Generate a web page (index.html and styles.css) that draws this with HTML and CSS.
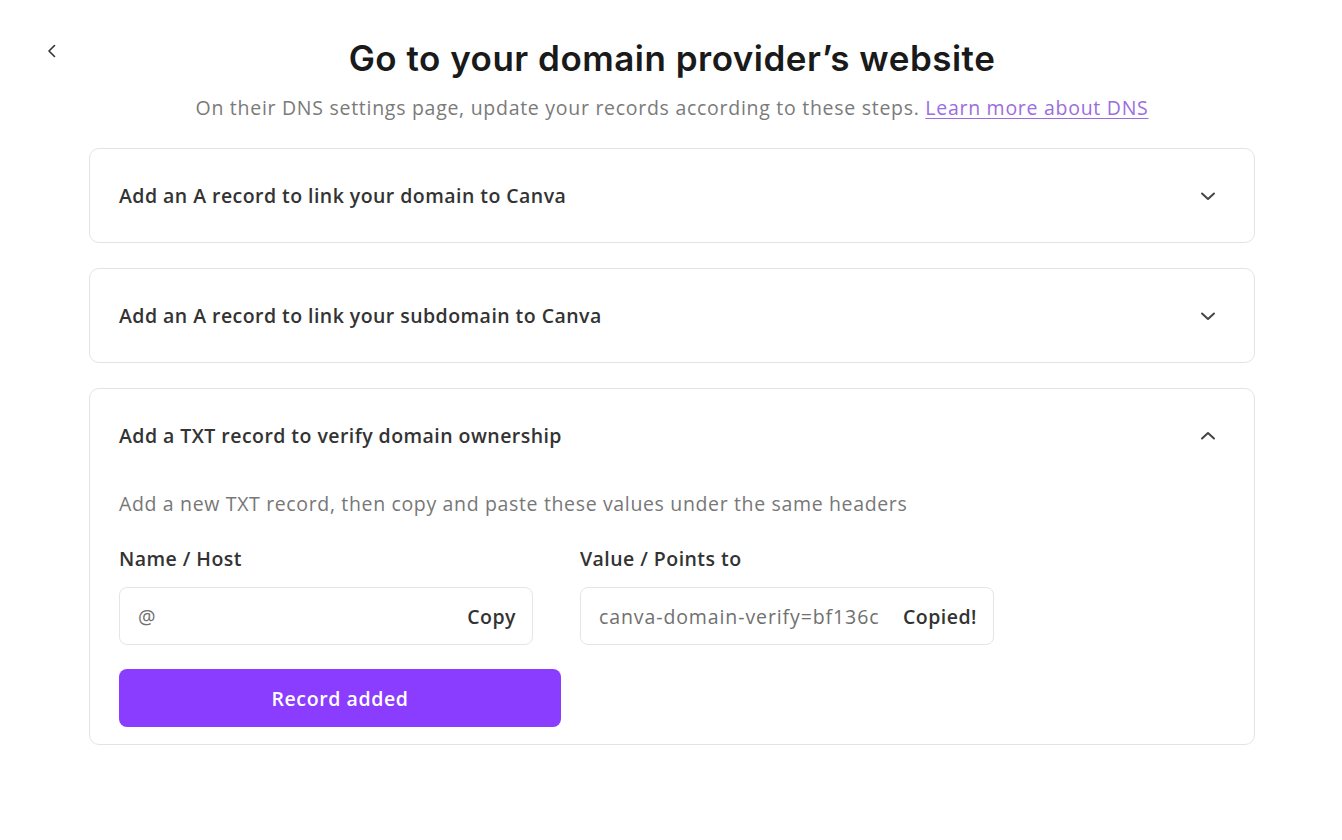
FILE: index.html
```html
<!DOCTYPE html>
<html lang="en">
<head>
<meta charset="utf-8">
<title>Go to your domain provider's website</title>
<link rel="stylesheet" href="styles.css">
</head>
<body>
<div class="page">
  <button class="back" aria-label="Back">
    <svg width="12" height="16" viewBox="0 0 12 16"><path d="M8.5 2.5 L3 8 L8.5 13.5" fill="none" stroke="#333" stroke-width="1.6" stroke-linecap="round" stroke-linejoin="round"/></svg>
  </button>
  <header class="head">
    <h1 class="title">Go to your domain provider’s website</h1>
    <p class="subtitle">On their DNS settings page, update your records according to these steps. <a class="link" href="#">Learn more about DNS</a></p>
  </header>
  <div class="cards">
    <section class="card">
      <div class="card-head">
        <span class="card-title">Add an A record to link your domain to Canva</span>
        <svg class="chev" width="18" height="12" viewBox="0 0 18 12"><path d="M3 3.5 L9 9 L15 3.5" fill="none" stroke="#444" stroke-width="2" stroke-linecap="round" stroke-linejoin="round"/></svg>
      </div>
    </section>
    <section class="card">
      <div class="card-head">
        <span class="card-title">Add an A record to link your subdomain to Canva</span>
        <svg class="chev" width="18" height="12" viewBox="0 0 18 12"><path d="M3 3.5 L9 9 L15 3.5" fill="none" stroke="#444" stroke-width="2" stroke-linecap="round" stroke-linejoin="round"/></svg>
      </div>
    </section>
    <section class="card open">
      <div class="card-head">
        <span class="card-title">Add a TXT record to verify domain ownership</span>
        <svg class="chev" width="18" height="12" viewBox="0 0 18 12"><path d="M3 8.5 L9 3 L15 8.5" fill="none" stroke="#444" stroke-width="2" stroke-linecap="round" stroke-linejoin="round"/></svg>
      </div>
      <div class="card-body">
        <p class="desc">Add a new TXT record, then copy and paste these values under the same headers</p>
        <div class="fields">
          <div class="field">
            <div class="label">Name / Host</div>
            <div class="input">
              <span class="value">@</span>
              <span class="action">Copy</span>
            </div>
          </div>
          <div class="field">
            <div class="label">Value / Points to</div>
            <div class="input">
              <span class="value">canva-domain-verify=bf136c</span>
              <span class="action">Copied!</span>
            </div>
          </div>
        </div>
        <button class="primary">Record added</button>
      </div>
    </section>
  </div>
</div>
</body>
</html>
```
FILE: styles.css
```css
* { box-sizing: border-box; }
html, body { margin: 0; padding: 0; background: #fff; }
body {
  font-family: "Open Sans", "Noto Sans", sans-serif;
  color: #333;
}
.page {
  position: relative;
  width: 1342px;
  padding: 38px 87px 0 89px;
}
.back {
  position: absolute;
  left: 44px;
  top: 42px;
  border: 0;
  background: none;
  padding: 0;
  width: 16px;
  height: 18px;
  display: flex;
  align-items: center;
  justify-content: center;
}
.head {
  text-align: center;
}
.title {
  margin: 0;
  font-family: Inter, "Liberation Sans", sans-serif;
  font-weight: 600;
  font-size: 35px;
  line-height: 40px;
  letter-spacing: 0.5px;
  color: #1a1a1a;
}
.subtitle {
  margin: 18px 0 0;
  font-size: 19.5px;
  line-height: 24px;
  letter-spacing: 0.72px;
  color: #7a7a7a;
}
.link {
  color: #9b6de0;
  text-decoration: underline;
  text-underline-offset: 3px;
}
.cards {
  margin-top: 28px;
  display: flex;
  flex-direction: column;
  gap: 25px;
}
.card {
  border: 1px solid #e3e3e3;
  border-radius: 10px;
  padding: 0 29px;
}
.card-head {
  height: 93px;
  display: flex;
  align-items: center;
  justify-content: space-between;
}
.card-title {
  font-size: 19.5px;
  font-weight: 600;
  letter-spacing: 0.45px;
  color: #333;
}
.chev { margin-right: 8px; }
.card-body {
  padding: 0 0 17px;
}
.desc {
  margin: 9px 0 0;
  font-size: 19.5px;
  line-height: 26px;
  letter-spacing: 0.65px;
  color: #777;
}
.fields {
  display: flex;
  gap: 47px;
  margin-top: 30px;
}
.field {
  width: 414px;
}
.label {
  font-size: 19.5px;
  font-weight: 600;
  line-height: 24px;
  letter-spacing: 0.45px;
  color: #333;
}
.input {
  margin-top: 16px;
  height: 58px;
  border: 1px solid #e5e5e5;
  border-radius: 8px;
  display: flex;
  align-items: center;
  justify-content: space-between;
  padding: 0 16px 0 18px;
  font-size: 19.5px;
}
.value { color: #707070; letter-spacing: 0.9px; }
.action { font-weight: 600; color: #333; letter-spacing: 0.5px; }
.primary {
  margin-top: 24px;
  width: 442px;
  height: 58px;
  border: 0;
  border-radius: 8px;
  background: #8b3dff;
  color: #fff;
  font-family: "Open Sans", "Noto Sans", sans-serif;
  font-size: 19.5px;
  font-weight: 600;
  letter-spacing: 0.6px;
  display: block;
}
```
